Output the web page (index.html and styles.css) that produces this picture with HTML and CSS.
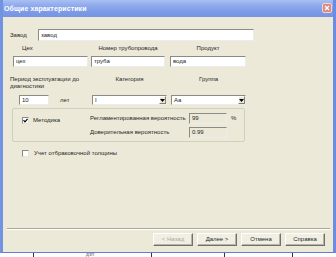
FILE: index.html
```html
<!DOCTYPE html>
<html lang="ru">
<head>
<meta charset="utf-8">
<title>Общие характеристики</title>
<link rel="stylesheet" href="styles.css">
</head>
<body>
<div class="window">
  <div class="titlebar">
    <span class="title">Общие характеристики</span>
    <span class="close"><svg width="10" height="10" viewBox="0 0 10 10"><path d="M2.5 2.5 L7.5 7.5 M7.5 2.5 L2.5 7.5" stroke="#fff" stroke-width="1.6"/></svg></span>
  </div>
  <div class="client">
    <div class="row1">
      <span class="lbl-zavod">Завод</span>
      <div class="edit zavod">завод</div>
    </div>
    <div class="row2-labels">
      <span class="c-a lbl-ceh">Цех</span>
      <span class="c-b">Номер трубопровода</span>
      <span class="c-c">Продукт</span>
    </div>
    <div class="row2-inputs">
      <div class="edit c-a">цех</div>
      <div class="edit c-b">труба</div>
      <div class="edit c-c">вода</div>
    </div>
    <div class="row3-labels">
      <span class="d-a">Период эксплуатации до<br>диагностики</span>
      <span class="d-b">Категория</span>
      <span class="d-c">Группа</span>
    </div>
    <div class="row3-controls">
      <div class="d-a period">
        <div class="edit years">10</div>
        <span class="let">лет</span>
      </div>
      <div class="combo d-b"><span class="combo-text">I</span><span class="drop"><svg width="5" height="3" viewBox="0 0 5 3"><path d="M0 0 H5 L2.5 3 Z" fill="#000"/></svg></span></div>
      <div class="combo d-c"><span class="combo-text">Aa</span><span class="drop"><svg width="5" height="3" viewBox="0 0 5 3"><path d="M0 0 H5 L2.5 3 Z" fill="#000"/></svg></span></div>
    </div>
    <div class="group">
      <div class="group-left">
        <span class="check checked"><svg width="5" height="5" viewBox="0 0 5 5"><path d="M0.5 2.2 L2 3.8 L4.6 0.8" stroke="#000" stroke-width="1.2" fill="none"/></svg></span>
        <span class="check-label">Методика</span>
      </div>
      <div class="group-right">
        <div class="prob-row">
          <span class="prob-label">Регламентированная вероятность</span>
          <div class="edit ro prob">99</div>
          <span class="pct">%</span>
        </div>
        <div class="prob-row">
          <span class="prob-label">Доверительная вероятность</span>
          <div class="edit ro prob">0.99</div>
        </div>
      </div>
    </div>
    <div class="cb-row">
      <span class="check"></span>
      <span class="check-label">Учет отбраковочной толщины</span>
    </div>
    <div class="separator"></div>
    <div class="buttons">
      <span class="btn disabled">&lt; Назад</span>
      <span class="btn">Далее &gt;</span>
      <span class="btn">Отмена</span>
      <span class="btn">Справка</span>
    </div>
  </div>
</div>
<div class="below">
  <span class="tick t1"></span>
  <span class="below-text">ДЗП</span>
  <span class="tick t2"></span>
  <span class="tick t3"></span>
  <span class="tick t4"></span>
</div>
</body>
</html>
```
FILE: styles.css
```css
html, body {
  margin: 0;
  padding: 0;
}
body {
  width: 336px;
  height: 257px;
  overflow: hidden;
  background: #ffffff;
  font-family: "Liberation Sans", Arial, sans-serif;
  font-size: 6px;
  line-height: 7px;
  color: #262626;
}
.window {
  width: 336px;
  height: 253px;
  box-sizing: border-box;
  border-left: 3px solid #7193e2;
  border-right: 3px solid #6b8ce0;
  border-bottom: 1px solid #5f80da;
  display: flex;
  flex-direction: column;
  background: #ece9d8;
}
.titlebar {
  height: 17px;
  flex: none;
  background: linear-gradient(#a9bff3 0%, #8ea9ec 35%, #7c9ae6 70%, #7594e4 100%);
  display: flex;
  align-items: center;
  justify-content: space-between;
  padding: 0 1px 1px 1px;
  box-sizing: border-box;
}
.title {
  color: #ffffff;
  font-weight: bold;
  font-size: 7px;
  letter-spacing: 0.1px;
}
.close {
  width: 10px;
  height: 10px;
  background: #d98a84;
  border: 1px solid #f2d4d2;
  box-sizing: border-box;
  border-radius: 2px;
  display: flex;
  align-items: center;
  justify-content: center;
}
.close svg { display: block; }
.client {
  flex: 1;
  display: flex;
  flex-direction: column;
  background: #ece9d8;
}
.edit {
  box-sizing: border-box;
  background: #ffffff;
  border: 1px solid;
  border-color: #8a8a86 #ececea #ececea #8a8a86;
  padding-left: 2px;
  display: flex;
  align-items: center;
  overflow: hidden;
  white-space: nowrap;
}
.edit.ro {
  background: #ece9d8;
}
.row1 {
  display: flex;
  align-items: center;
  margin-top: 12px;
  height: 12px;
  padding-left: 7px;
}
.lbl-zavod { width: 28px; }
.edit.zavod { width: 216px; height: 12px; }
.row2-labels {
  display: flex;
  margin-top: 4px;
  height: 7px;
  padding-left: 10px;
}
.row2-inputs {
  display: flex;
  margin-top: 4px;
  height: 11px;
  padding-left: 10px;
}
.c-a { width: 75px; }
.c-b { width: 74px; margin-left: 3px; }
.c-c { width: 76px; margin-left: 5px; }
.row2-labels .c-b, .row2-labels .c-c { text-align: center; }
.lbl-ceh { padding-left: 9px; box-sizing: border-box; }
.row3-labels {
  display: flex;
  margin-top: 9px;
  height: 14px;
  padding-left: 7px;
}
.row3-controls {
  display: flex;
  margin-top: 5px;
  height: 10px;
  padding-left: 7px;
}
.d-a { width: 82px; }
.d-b { width: 75px; }
.d-c { width: 75px; margin-left: 4px; }
.row3-labels .d-b, .row3-labels .d-c { text-align: center; }
.period { display: flex; align-items: center; }
.edit.years { width: 30px; height: 10px; margin-left: 9px; }
.let { margin-left: 11px; }
.combo {
  box-sizing: border-box;
  height: 10px;
  background: #ffffff;
  border: 1px solid;
  border-color: #8a8a86 #ececea #ececea #8a8a86;
  display: flex;
  align-items: center;
  justify-content: space-between;
}
.combo-text { padding-left: 2px; }
.drop {
  width: 7px;
  height: 8px;
  box-sizing: border-box;
  background: #ece9d8;
  border: 1px solid;
  border-color: #ffffff #808080 #808080 #ffffff;
  display: flex;
  align-items: center;
  justify-content: center;
}
.drop svg { display: block; }
.group {
  box-sizing: border-box;
  margin-top: 3px;
  margin-left: 9px;
  width: 233px;
  height: 34px;
  border: 1px solid #d0d0bf;
  border-radius: 2px;
  display: flex;
  padding-top: 4px;
}
.group-left {
  display: flex;
  align-items: center;
  height: 7px;
  margin-top: 4px;
  padding-left: 9px;
  width: 68px;
}
.check {
  width: 7px;
  height: 7px;
  box-sizing: border-box;
  background: #ffffff;
  border: 1px solid;
  border-color: #8a8a86 #e4e4e0 #e4e4e0 #8a8a86;
  display: inline-flex;
  align-items: center;
  justify-content: center;
  flex: none;
}
.check svg { display: block; }
.check-label { margin-left: 4px; }
.group-right {
  display: flex;
  flex-direction: column;
  gap: 3px;
}
.prob-row {
  display: flex;
  align-items: center;
  height: 11px;
}
.prob-label { width: 99px; }
.edit.prob { width: 38px; height: 11px; }
.pct { margin-left: 4px; }
.cb-row {
  display: flex;
  align-items: center;
  margin-top: 8px;
  height: 7px;
  padding-left: 19px;
}
.cb-row .check-label { margin-left: 5px; }
.separator {
  margin-top: 71px;
  margin-left: 4px;
  width: 323px;
  height: 0;
  border-top: 1px solid #aca899;
  border-bottom: 1px solid #ffffff;
}
.buttons {
  display: flex;
  justify-content: flex-end;
  gap: 4px;
  margin-top: 3px;
  padding-right: 8px;
  height: 13px;
}
.btn {
  width: 40px;
  height: 13px;
  box-sizing: border-box;
  background: #f1efe4;
  border: 1px solid;
  border-color: #ffffff #707070 #707070 #ffffff;
  box-shadow: inset -1px -1px 0 #b8b4a4;
  display: flex;
  align-items: center;
  justify-content: center;
  white-space: nowrap;
}
.btn.disabled { color: #aca899; }
.below {
  height: 4px;
  display: flex;
  align-items: flex-start;
  overflow: hidden;
}
.tick {
  width: 1px;
  height: 4px;
  background: #333333;
  flex: none;
}
.t1 { margin-left: 33px; }
.below-text {
  margin-left: 52px;
  font-size: 4px;
  line-height: 4px;
  color: #333;
}
.t2 { margin-left: 57px; }
.t3 { margin-left: 72px; }
.t4 { margin-left: 67px; }
```
